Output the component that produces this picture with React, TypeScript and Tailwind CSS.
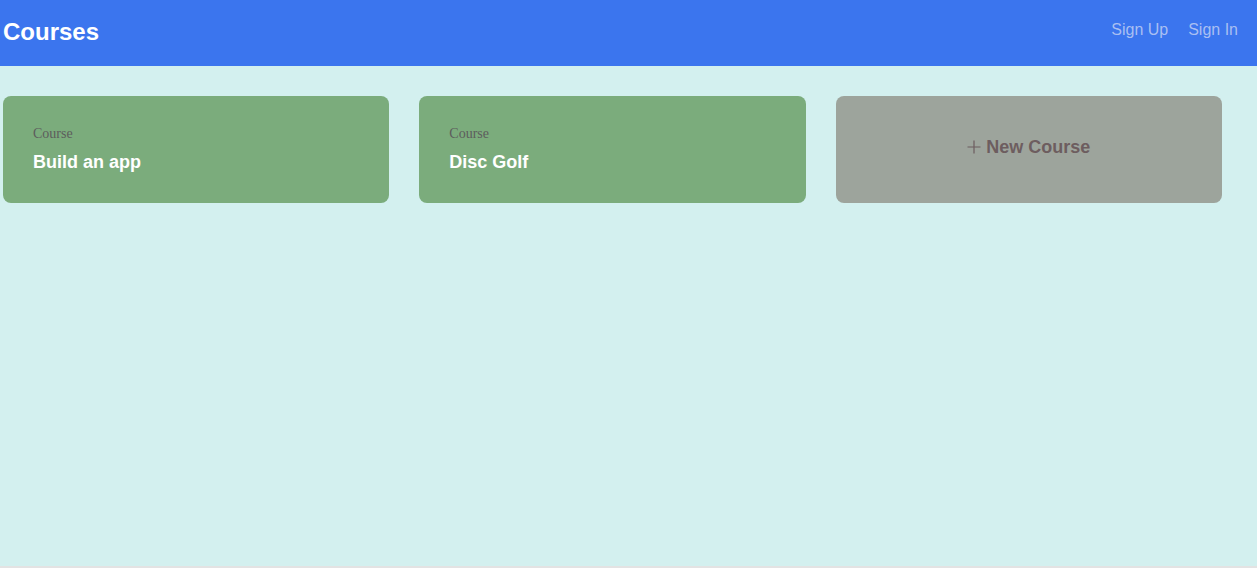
const courses = ["Build an app", "Disc Golf"];

const App = () => {
  return (
    <div className="h-[568px] bg-[#e3e3e3] font-['Liberation_Sans',Arial,sans-serif]">
      <div className="h-[566px] bg-[#d3f0ef]">
        <nav className="h-[66px] bg-[#3b75ee] flex items-center justify-between pl-[3px] pr-[19px]">
          <h1 className="text-[24px] font-bold text-white leading-none -mt-[2px]">Courses</h1>
          <ul className="flex gap-5 text-[16px] text-[#a9bff2] -mt-[6px]">
            <li>Sign Up</li>
            <li>Sign In</li>
          </ul>
        </nav>
        <div className="grid grid-cols-3 gap-[30px] w-[1222px] pl-[3px] mt-[30px]">
          {courses.map((c) => (
            <div key={c} className="h-[107px] rounded-lg bg-[#7bac7c] px-[30px] pt-[31px]">
              <div className="font-['Liberation_Serif',serif] text-[14px] text-[#5d5d5d] leading-none">Course</div>
              <div className="text-[18px] font-bold text-white mt-[8px]">{c}</div>
            </div>
          ))}
          <div className="h-[107px] rounded-lg bg-[#9da49c] flex items-center justify-center">
            <span className="text-[18px] font-bold text-[#6d5d5f] flex items-center gap-[5px] -mt-[4px]">
              <svg width="14" height="14" viewBox="0 0 14 14" className="-mt-[1px]">
                <path d="M7 0.5v13M0.5 7h13" stroke="#6d5d5f" strokeWidth="1.2" />
              </svg>
              New Course
            </span>
          </div>
        </div>
      </div>
    </div>
  );
};

export default App;
